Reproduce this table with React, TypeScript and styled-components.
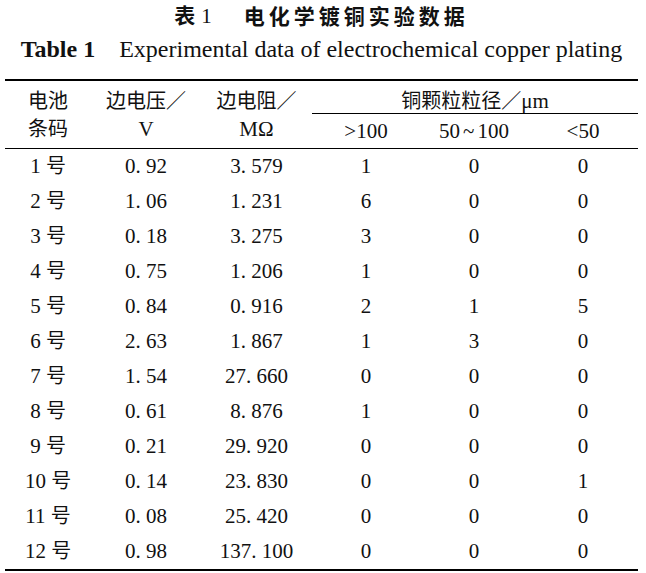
import React from "react";
import styled, { createGlobalStyle } from "styled-components";

const GlobalStyle = createGlobalStyle`
  html, body { margin: 0; padding: 0; background: #ffffff; }
  body {
    font-family: "Liberation Serif", "Noto Sans CJK SC", serif;
    color: #111111;
  }
`;

const COLS = "86px 110px 111px 108px 108px 110px";

const Page = styled.div`
  width: 633px;
  margin-left: 5px;
  display: flex;
  flex-direction: column;
`;

const Title = styled.div`
  display: flex;
  justify-content: center;
  align-items: center;
  font-family: "Noto Sans CJK SC", sans-serif;
  font-weight: 700;
  font-size: 21px;
  line-height: 28px;
  color: #111;
`;

const TitleNo = styled.span`
  margin-right: 32px;
  white-space: nowrap;
`;

const TitleNum = styled.span`
  font-family: "Liberation Serif", serif;
  font-weight: 400;
  margin-left: 6px;
`;

const TitleText = styled.span`
  letter-spacing: 4px;
`;

const Subtitle = styled.div`
  margin-top: 4px;
  text-align: center;
  font-size: 24px;
  line-height: 30px;
  white-space: nowrap;
`;

const SubLabel = styled.b`
  font-weight: 700;
  margin-right: 24px;
`;

const Table = styled.div`
  margin-top: 15px;
  border-top: 2px solid #000;
  border-bottom: 2px solid #000;
  display: flex;
  flex-direction: column;
`;

const Head = styled.div`
  display: grid;
  grid-template-columns: ${COLS};
  grid-template-rows: 33px 34px;
  border-bottom: 1px solid #000;
`;

const StackCell = styled.div`
  grid-row: 1 / span 2;
  display: flex;
  flex-direction: column;
  align-items: center;
  justify-content: center;
  line-height: 28px;
  font-size: 20px;
`;

const HeadLine = styled.span<{ $latin?: boolean }>`
  font-size: ${(p) => (p.$latin ? 21 : 20)}px;
  white-space: nowrap;
`;

const Slash = styled.span`
  font-family: "Noto Sans CJK SC", sans-serif;
  font-size: 20px;
`;

const SpanCell = styled.div`
  grid-column: 4 / span 3;
  grid-row: 1;
  border-bottom: 1px solid #000;
  padding-top: 6px;
  line-height: 26px;
  font-size: 20px;
  text-align: center;
  box-sizing: border-box;
`;

const SubHeadCell = styled.div`
  grid-row: 2;
  line-height: 34px;
  font-size: 21px;
  text-align: center;
  white-space: nowrap;
`;

const Tilde = styled.span`
  margin: 0 3px;
`;

const Row = styled.div`
  display: grid;
  grid-template-columns: ${COLS};
  height: 35px;
`;

const Cell = styled.div`
  line-height: 35px;
  font-size: 21px;
  text-align: center;
  white-space: pre;
`;

const Hao = styled.span`
  font-size: 20px;
`;

const rows: [string, string, string, string, string, string][] = [
  ["1", "0. 92", "3. 579", "1", "0", "0"],
  ["2", "1. 06", "1. 231", "6", "0", "0"],
  ["3", "0. 18", "3. 275", "3", "0", "0"],
  ["4", "0. 75", "1. 206", "1", "0", "0"],
  ["5", "0. 84", "0. 916", "2", "1", "5"],
  ["6", "2. 63", "1. 867", "1", "3", "0"],
  ["7", "1. 54", "27. 660", "0", "0", "0"],
  ["8", "0. 61", "8. 876", "1", "0", "0"],
  ["9", "0. 21", "29. 920", "0", "0", "0"],
  ["10", "0. 14", "23. 830", "0", "0", "1"],
  ["11", "0. 08", "25. 420", "0", "0", "0"],
  ["12", "0. 98", "137. 100", "0", "0", "0"],
];

export default function App() {
  return (
    <>
      <GlobalStyle />
      <Page>
        <Title>
          <TitleNo>
            表<TitleNum>1</TitleNum>
          </TitleNo>
          <TitleText>电化学镀铜实验数据</TitleText>
        </Title>
        <Subtitle>
          <SubLabel>Table 1</SubLabel>
          Experimental data of electrochemical copper plating
        </Subtitle>
        <Table>
          <Head>
            <StackCell>
              <HeadLine>电池</HeadLine>
              <HeadLine>条码</HeadLine>
            </StackCell>
            <StackCell>
              <HeadLine>
                边电压<Slash>／</Slash>
              </HeadLine>
              <HeadLine $latin>V</HeadLine>
            </StackCell>
            <StackCell>
              <HeadLine>
                边电阻<Slash>／</Slash>
              </HeadLine>
              <HeadLine $latin>MΩ</HeadLine>
            </StackCell>
            <SpanCell>
              铜颗粒粒径<Slash>／</Slash>
              <HeadLine $latin>μm</HeadLine>
            </SpanCell>
            <SubHeadCell>&gt;100</SubHeadCell>
            <SubHeadCell>
              50<Tilde>~</Tilde>100
            </SubHeadCell>
            <SubHeadCell>&lt;50</SubHeadCell>
          </Head>
          {rows.map((r) => (
            <Row key={r[0]}>
              <Cell>
                {r[0]} <Hao>号</Hao>
              </Cell>
              <Cell>{r[1]}</Cell>
              <Cell>{r[2]}</Cell>
              <Cell>{r[3]}</Cell>
              <Cell>{r[4]}</Cell>
              <Cell>{r[5]}</Cell>
            </Row>
          ))}
        </Table>
      </Page>
    </>
  );
}
